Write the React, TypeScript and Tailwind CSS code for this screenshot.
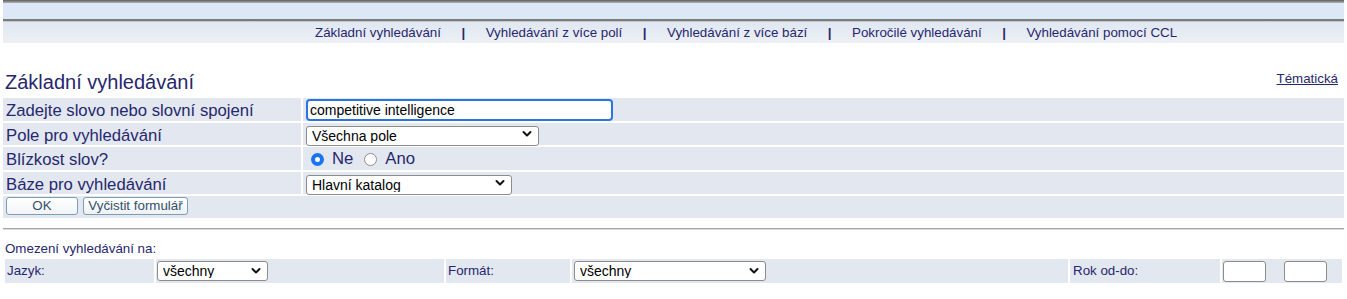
import React from 'react'

const navItems = [
  'Základní vyhledávání',
  'Vyhledávání z více polí',
  'Vyhledávání z více bází',
  'Pokročilé vyhledávání',
  'Vyhledávání pomocí CCL',
]

const Chevron = () => (
  <svg
    className="pointer-events-none absolute right-[7px] top-1/2 -translate-y-1/2"
    width="10"
    height="7"
    viewBox="0 0 10 7"
  >
    <path d="M1.5 1.5l3.5 3.5 3.5-3.5" fill="none" stroke="#111" strokeWidth="2" strokeLinecap="round" strokeLinejoin="round" />
  </svg>
)

const Select = ({ value, className }: { value: string; className: string }) => (
  <div className={`relative ${className}`}>
    <select
      defaultValue={value}
      className="h-full w-full appearance-none rounded-[3px] border border-[#8c8c8c] bg-white pl-[5px] text-[14px] leading-none text-black outline-none"
    >
      <option>{value}</option>
    </select>
    <Chevron />
  </div>
)

const Radio = ({ checked }: { checked?: boolean }) =>
  checked ? (
    <span className="flex h-[13px] w-[13px] shrink-0 items-center justify-center rounded-full bg-[#1a73f0]">
      <span className="h-[5px] w-[5px] rounded-full bg-white" />
    </span>
  ) : (
    <span className="block h-[13px] w-[13px] shrink-0 rounded-full border border-[#8e8e8e] bg-white" />
  )

const Label = ({ children, h }: { children: React.ReactNode; h: string }) => (
  <div className={`flex items-center bg-[#e2e7f0] pl-[3px] pt-[2px] text-[16.7px] leading-[19px] ${h}`}>{children}</div>
)

const Cell = ({ children, className = '' }: { children?: React.ReactNode; className?: string }) => (
  <div className={`flex items-center bg-[#e2e7f0] ${className}`}>{children}</div>
)

export default function App() {
  return (
    <div className="w-[1347px] font-['Liberation_Sans',Arial,sans-serif] text-[#27276d]">
      {/* top bar */}
      <div className="mx-[3px]">
        <div className="h-[3px] bg-gradient-to-b from-[#5e5e5e] to-[#b4b4b4]" />
        <div className="h-[16px] bg-[#dde8f7]" />
        <div className="h-[2px] bg-[#7b7b7b]" />
        <div className="h-[1px] bg-[#c3c8cf]" />
        <div className="flex h-[21px] items-center bg-gradient-to-b from-[#e0e8f3] to-[#edf0f4] pl-[312px] text-[13.33px]">
          {navItems.map((item, i) => (
            <React.Fragment key={item}>
              {i > 0 && <span className="mx-[20.5px] font-bold text-[#2a2a66]">|</span>}
              <a className="cursor-pointer">{item}</a>
            </React.Fragment>
          ))}
        </div>
      </div>

      {/* title */}
      <div className="mt-[28px] flex items-start justify-between pl-[5px] pr-[9px]">
        <h1 className="text-[20px] leading-[23px]">Základní vyhledávání</h1>
        <a className="text-[13.33px] leading-[16px] underline">Tématická</a>
      </div>

      {/* main form */}
      <div className="mx-[3px] mt-[4px] grid grid-cols-[298px_1fr] gap-[2px]">
        <Label h="h-[23px]">Zadejte slovo nebo slovní spojení</Label>
        <Cell className="h-[23px] pl-[3px]">
          <input
            defaultValue="competitive intelligence"
            className="h-[22px] w-[307px] rounded-[4px] border-2 border-[#2a74e6] bg-white pl-[2px] text-[14px] text-black outline-none"
          />
        </Cell>
        <Label h="h-[22px]">Pole pro vyhledávání</Label>
        <Cell className="h-[22px] pl-[3px]">
          <Select value="Všechna pole" className="h-[20px] w-[233px]" />
        </Cell>
        <Label h="h-[23px]">Blízkost slov?</Label>
        <Cell className="h-[23px] pl-[8px] pt-[1px] text-[16.7px]">
          <Radio checked />
          <span className="ml-[8px]">Ne</span>
          <span className="ml-[11px] flex">
            <Radio />
          </span>
          <span className="ml-[8px]">Ano</span>
        </Cell>
        <Label h="h-[22px]">Báze pro vyhledávání</Label>
        <Cell className="h-[22px] pl-[3px]">
          <Select value="Hlavní katalog" className="h-[20px] w-[206px]" />
        </Cell>
        <div className="col-span-2 flex h-[22px] items-start gap-[5px] bg-[#e2e7f0] pl-[3px] pt-[1px]">
          <button className="h-[18px] w-[72px] rounded-[3px] border border-[#7f9db3] bg-gradient-to-b from-white to-[#f1f4f7] text-[13.33px] leading-none text-[#33506a]">
            OK
          </button>
          <button className="h-[18px] w-[105px] rounded-[3px] border border-[#7f9db3] bg-gradient-to-b from-white to-[#eef2f6] text-[13.33px] leading-none text-[#33506a]">
            Vyčistit formulář
          </button>
        </div>
      </div>

      <div className="mx-[3px] mt-[10px] border-t border-b border-t-[#a6a6a6] border-b-[#dadada]" />

      {/* limits */}
      <div className="mt-[11px] pl-[5px] text-[13.33px] leading-[16px]">Omezení vyhledávání na:</div>
      <div className="ml-[5px] mt-[2px] grid grid-cols-[149px_288px_124px_496px_150px_120px] gap-[2px] text-[13.33px]">
        <Cell className="h-[24px] pl-[2px]">Jazyk:</Cell>
        <Cell className="h-[24px] pl-[1px]">
          <Select value="všechny" className="h-[20px] w-[111px]" />
        </Cell>
        <Cell className="h-[24px] pl-[2px]">Formát:</Cell>
        <Cell className="h-[24px] pl-[2px]">
          <Select value="všechny" className="h-[20px] w-[192px]" />
        </Cell>
        <Cell className="h-[24px] pl-[3px]">Rok od-do:</Cell>
        <Cell className="h-[24px] gap-[18px] pl-[1px]">
          <input className="h-[21px] w-[43px] rounded-[3px] border border-[#8c8c8c] bg-white outline-none" />
          <input className="h-[21px] w-[43px] rounded-[3px] border border-[#8c8c8c] bg-white outline-none" />
        </Cell>
      </div>
    </div>
  )
}
